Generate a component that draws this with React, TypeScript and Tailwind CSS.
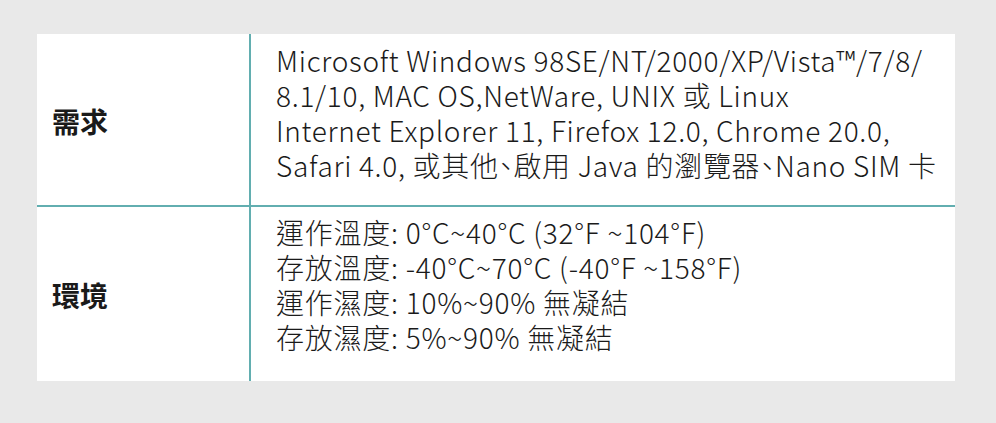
export default function App() {
  const font = { fontFamily: '"Noto Sans CJK TC", "Noto Sans", sans-serif' };
  const comma = <span className="[font-feature-settings:'halt']">、</span>;
  return (
    <div className="w-[996px] h-[423px] bg-[#e9e9e9] pt-[34px] pl-[37px]" style={font}>
      <div className="w-[918px] bg-white text-[#1a1a1a]">
        <div className="flex h-[171px]">
          <div className="w-[214px] flex items-center pl-[15px] pt-[2px] text-[28px] font-bold border-r-2 border-[#62aeb0]">需求</div>
          <div className="flex-1 pl-[25px] pt-[9px] text-[28px] font-light leading-[35px] tracking-[0.7px]">
            <div>Microsoft Windows 98SE/NT/2000/XP/Vista™/7/8/</div>
            <div>8.1/10, MAC OS,NetWare, UNIX 或 Linux</div>
            <div>Internet Explorer 11, Firefox 12.0, Chrome 20.0,</div>
            <div>Safari 4.0, 或其他{comma}啟用 Java 的瀏覽器{comma}Nano SIM 卡</div>
          </div>
        </div>
        <div className="h-[2px] bg-[#62aeb0]"></div>
        <div className="flex h-[174px]">
          <div className="w-[214px] flex items-center pl-[15px] pt-[2px] text-[28px] font-bold border-r-2 border-[#62aeb0]">環境</div>
          <div className="flex-1 pl-[25px] pt-[8px] text-[28px] font-light leading-[35px] tracking-[0.75px]">
            <div>運作溫度: 0°C~40°C (32°F ~104°F)</div>
            <div>存放溫度: -40°C~70°C (-40°F ~158°F)</div>
            <div>運作濕度: 10%~90% 無凝結</div>
            <div>存放濕度: 5%~90% 無凝結</div>
          </div>
        </div>
      </div>
    </div>
  );
}
